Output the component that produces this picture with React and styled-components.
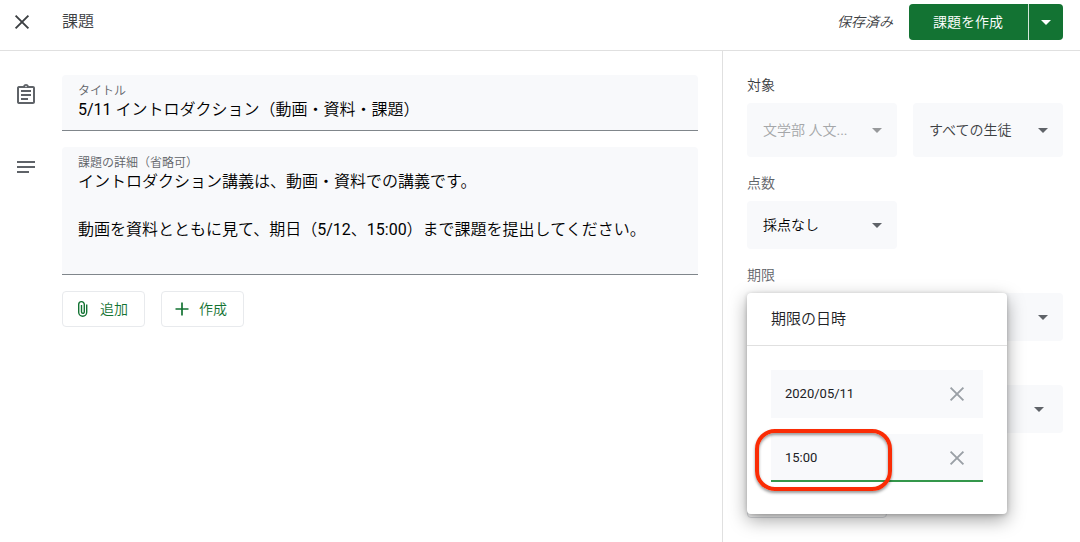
import React from "react";
import styled, { createGlobalStyle } from "styled-components";
import {
  MdArrowDropDown,
  MdNotes,
  MdOutlineAssignment,
} from "react-icons/md";

const GlobalStyle = createGlobalStyle`
  * {
    box-sizing: border-box;
  }

  body {
    margin: 0;
    background: #fff;
    color: #3c4043;
    font-family: Roboto, "Noto Sans CJK JP DemiLight", "Noto Sans CJK JP", sans-serif;
    font-size: 14px;
    line-height: 20px;
  }

  button,
  input,
  select,
  textarea {
    font: inherit;
    color: inherit;
  }
`;

const Page = styled.div`
  display: flex;
  flex-direction: column;
  min-height: 100vh;
`;

const Header = styled.header`
  display: flex;
  align-items: center;
  padding: 4px 17px 10px 0;
  border-bottom: 1px solid #e0e0e0;
`;

const IconButton = styled.button`
  display: flex;
  padding: 0;
  border: none;
  background: none;
  color: ${({ $color }) => $color || "#3c4043"};
  cursor: pointer;
`;

const CloseSlot = styled.div`
  flex: 0 0 62px;
  padding-left: 10px;
`;

const PageTitle = styled.h1`
  flex: 1;
  margin: 0;
  font-size: 16px;
  font-weight: 400;
`;

const SavedStatus = styled.span`
  margin-right: 16px;
  font-style: italic;
`;

const SplitButton = styled.div`
  display: flex;
  gap: 1px;
  height: 36px;
  border-radius: 4px;
  background: #d5e6da;
  overflow: hidden;
`;

const PrimaryButton = styled.button`
  display: flex;
  align-items: center;
  justify-content: center;
  padding: ${({ $narrow }) => ($narrow ? "0 5px" : "0 25px 0 24px")};
  border: none;
  background: #137333;
  color: #fff;
  font-weight: 500;
  cursor: pointer;
`;

const Content = styled.div`
  display: flex;
  flex: 1;
`;

const Main = styled.main`
  flex: 1;
  display: flex;
  flex-direction: column;
  gap: 16px;
  padding: 24px 24px 24px 0;
`;

const FieldRow = styled.div`
  display: flex;
`;

const FieldIcon = styled.div`
  flex: 0 0 62px;
  padding: 8px 0 0 14px;
  color: #5f6368;
  font-size: 24px;
  line-height: 0;
`;

const Field = styled.div`
  flex: 1;
  display: flex;
  flex-direction: column;
  padding: 9px 16px 8px;
  border-bottom: 1px solid #80868b;
  border-radius: 4px 4px 0 0;
  background: #f8f9fb;

  label {
    color: #5f6368;
    font-size: 12px;
    line-height: 14px;
  }

  input,
  textarea {
    display: block;
    width: 100%;
    padding: 0;
    border: none;
    outline: none;
    background: none;
    color: #000;
    font-size: 16px;
    line-height: 24px;
    resize: none;
  }

  input {
    height: 24px;
  }
`;

const Attachments = styled.div`
  display: flex;
  gap: 16px;
  padding-left: 62px;
`;

const OutlineButton = styled.button`
  display: flex;
  align-items: center;
  gap: 6px;
  height: 36px;
  padding: 0 16px 0 9px;
  border: 1px solid #e8eaed;
  border-radius: 4px;
  background: #fff;
  color: #137333;
  cursor: pointer;
`;

const ButtonIcon = styled.span`
  display: flex;
  justify-content: center;
  width: 22px;
`;

const Sidebar = styled.aside`
  flex: 0 0 358px;
  display: flex;
  flex-direction: column;
  gap: 16px;
  padding: 24px 17px 24px 24px;
  border-left: 1px solid #e0e0e0;
`;

const Group = styled.div`
  display: flex;
  flex-direction: column;
  gap: 8px;
`;

const GroupLabel = styled.label`
  color: ${({ $strong }) => ($strong ? "#3c4043" : "#5f6368")};
`;

const Columns = styled.div`
  display: grid;
  grid-template-columns: 1fr 1fr;
  gap: 16px;
`;

const SelectBox = styled.div`
  display: grid;
  align-items: center;
  height: ${({ $tall }) => ($tall ? "54px" : "48px")};
  border-radius: 4px;
  background: #f8f9fb;
  color: ${({ $color }) => $color || "#3c4043"};

  select,
  svg {
    grid-area: 1 / 1;
  }

  select {
    width: 100%;
    height: 100%;
    padding: 0 44px 0 16px;
    border: none;
    outline: none;
    appearance: none;
    background: none;
    opacity: 1;
  }

  svg {
    justify-self: end;
    margin-right: ${({ $wide }) => ($wide ? "12px" : "8px")};
    color: ${({ $arrow }) => $arrow || "#5f6368"};
    font-size: 24px;
    pointer-events: none;
  }
`;

const RubricButton = styled(OutlineButton)`
  align-self: flex-start;
  height: 41px;
  padding-right: 18px;
  border-color: #dadce0;
`;

const PopupAnchor = styled.div`
  position: relative;
`;

const Popup = styled.div`
  position: absolute;
  top: 0;
  left: 0;
  z-index: 2;
  width: 260px;
  border-radius: 4px;
  background: #fff;
  box-shadow: 0 6px 18px rgba(0, 0, 0, 0.36), 0 1px 4px rgba(0, 0, 0, 0.2);
`;

const PopupTitle = styled.h2`
  margin: 0;
  padding: 16px 24px;
  border-bottom: 1px solid #e0e0e0;
  color: #202124;
  font-size: 15px;
  font-weight: 400;
`;

const PopupBody = styled.div`
  display: flex;
  flex-direction: column;
  gap: 16px;
  padding: 24px 24px 32px;
`;

const DateRow = styled.div`
  position: relative;
  display: flex;
  align-items: center;
  height: 48px;
  padding: 0 14px;
  background: #f8f9fb;
  box-shadow: ${({ $active }) => ($active ? "inset 0 -2px #34974b" : "none")};

  input {
    flex: 1;
    min-width: 0;
    padding: 0;
    border: none;
    outline: none;
    background: none;
    color: #202124;
    font-size: 13px;
  }
`;

const Highlight = styled.div`
  position: absolute;
  top: -5px;
  left: -16px;
  width: 137px;
  height: 62px;
  border: 4px solid #fa2c05;
  border-radius: 20px;
  box-shadow: 0 2px 3px rgba(0, 0, 0, 0.4), inset 0 2px 3px rgba(0, 0, 0, 0.4);
  pointer-events: none;
`;

const CloseIcon = () => (
  <svg width="24" height="24" viewBox="0 0 24 24" aria-hidden="true">
    <path
      d="M5.6 5.6l12.8 12.8M18.4 5.6L5.6 18.4"
      stroke="currentColor"
      strokeWidth="1.9"
    />
  </svg>
);

const ClipIcon = () => (
  <svg width="12" height="18" viewBox="0 0 12 18" fill="none" aria-hidden="true">
    <path
      d="M9.7 4.6v7.6a4 4 0 0 1-8 0V4.4a2.8 2.8 0 0 1 5.6 0v7.5a1.4 1.4 0 0 1-2.8 0V5"
      stroke="currentColor"
      strokeWidth="1.4"
    />
  </svg>
);

const PlusIcon = () => (
  <svg width="22" height="22" viewBox="0 0 22 22" aria-hidden="true">
    <path d="M4.5 11h13M11 4.5v13" stroke="currentColor" strokeWidth="1.7" />
  </svg>
);

const Select = ({ id, label, value, disabled, ...box }) => (
  <SelectBox {...box}>
    <select id={id} aria-label={label} disabled={disabled}>
      <option>{value}</option>
    </select>
    <MdArrowDropDown />
  </SelectBox>
);

const DuePopup = () => (
  <Popup role="dialog" aria-label="期限の日時">
    <PopupTitle>期限の日時</PopupTitle>
    <PopupBody>
      <DateRow>
        <input aria-label="日付" defaultValue="2020/05/11" />
        <IconButton $color="#9aa0a6" aria-label="日付を消去">
          <CloseIcon />
        </IconButton>
      </DateRow>
      <DateRow $active>
        <input aria-label="時刻" defaultValue="15:00" />
        <IconButton $color="#9aa0a6" aria-label="時刻を消去">
          <CloseIcon />
        </IconButton>
        <Highlight />
      </DateRow>
    </PopupBody>
  </Popup>
);

const details = `イントロダクション講義は、動画・資料での講義です。

動画を資料とともに見て、期日（5/12、15:00）まで課題を提出してください。
`;

const App = () => {
  return (
    <Page>
      <GlobalStyle />
      <Header>
        <CloseSlot>
          <IconButton aria-label="閉じる">
            <CloseIcon />
          </IconButton>
        </CloseSlot>
        <PageTitle>課題</PageTitle>
        <SavedStatus>保存済み</SavedStatus>
        <SplitButton>
          <PrimaryButton>課題を作成</PrimaryButton>
          <PrimaryButton $narrow aria-label="その他の操作">
            <MdArrowDropDown size={24} />
          </PrimaryButton>
        </SplitButton>
      </Header>
      <Content>
        <Main>
          <FieldRow>
            <FieldIcon>
              <MdOutlineAssignment />
            </FieldIcon>
            <Field>
              <label htmlFor="title">タイトル</label>
              <input
                id="title"
                defaultValue="5/11 イントロダクション（動画・資料・課題）"
              />
            </Field>
          </FieldRow>
          <FieldRow>
            <FieldIcon>
              <MdNotes />
            </FieldIcon>
            <Field>
              <label htmlFor="details">課題の詳細（省略可）</label>
              <textarea id="details" rows={4} defaultValue={details} />
            </Field>
          </FieldRow>
          <Attachments>
            <OutlineButton>
              <ButtonIcon>
                <ClipIcon />
              </ButtonIcon>
              追加
            </OutlineButton>
            <OutlineButton>
              <ButtonIcon>
                <PlusIcon />
              </ButtonIcon>
              作成
            </OutlineButton>
          </Attachments>
        </Main>
        <Sidebar>
          <Group>
            <GroupLabel $strong htmlFor="course">
              対象
            </GroupLabel>
            <Columns>
              <Select
                id="course"
                value="文学部 人文..."
                disabled
                $tall
                $color="#a5a7a9"
                $arrow="#97999b"
              />
              <Select label="生徒" value="すべての生徒" $tall />
            </Columns>
          </Group>
          <Group>
            <GroupLabel htmlFor="points">点数</GroupLabel>
            <Columns>
              <Select id="points" value="採点なし" $color="#000" />
            </Columns>
          </Group>
          <Group>
            <GroupLabel htmlFor="due">期限</GroupLabel>
            <PopupAnchor>
              <Select id="due" value="5月11日 15:00" />
              <DuePopup />
            </PopupAnchor>
          </Group>
          <Group>
            <GroupLabel htmlFor="topic">トピック</GroupLabel>
            <Select id="topic" value="トピックなし" $wide />
          </Group>
          <Group>
            <GroupLabel as="span">ルーブリック</GroupLabel>
            <RubricButton>
              <ButtonIcon>
                <PlusIcon />
              </ButtonIcon>
              ルーブリック
            </RubricButton>
          </Group>
        </Sidebar>
      </Content>
    </Page>
  );
};

export default App;
